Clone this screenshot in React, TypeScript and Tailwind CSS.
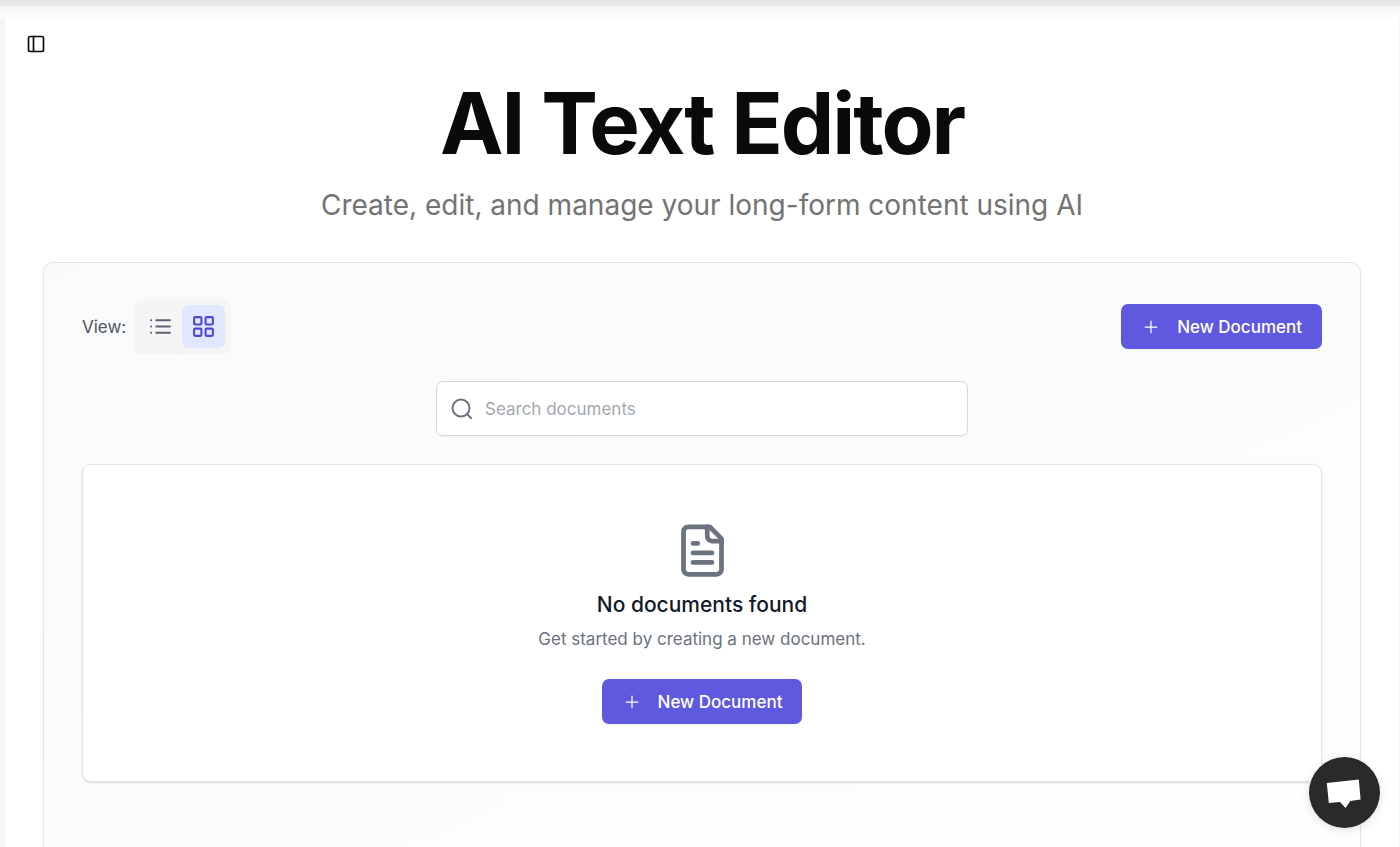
import { useState } from "react";
import type { ReactNode } from "react";

function Icon({ className, strokeWidth = 2, children }: { className: string; strokeWidth?: number; children: ReactNode }) {
  return (
    <svg
      className={className}
      viewBox="0 0 24 24"
      fill="none"
      stroke="currentColor"
      strokeWidth={strokeWidth}
      strokeLinecap="round"
      strokeLinejoin="round"
      aria-hidden="true"
    >
      {children}
    </svg>
  );
}

function NewDocumentButton() {
  return (
    <button
      type="button"
      className="flex h-[45px] items-center gap-4 rounded-[7px] bg-[#5f59e0] px-5 text-[17px] leading-6 font-medium text-white shadow-xs"
    >
      <Icon className="size-5" strokeWidth={1.5}>
        <path d="M5 12h14M12 5v14" />
      </Icon>
      New Document
    </button>
  );
}

function ViewButton({ label, active, onClick, children }: { label: string; active: boolean; onClick: () => void; children: ReactNode }) {
  return (
    <button
      type="button"
      aria-label={label}
      aria-pressed={active}
      onClick={onClick}
      className={
        active
          ? "rounded-[7px] bg-[#e0e7ff] p-[9px] text-[#5048cf]"
          : "rounded-[7px] p-[9px] text-[#5b6472]"
      }
    >
      <Icon className="size-[25px]">{children}</Icon>
    </button>
  );
}

export default function App() {
  const [view, setView] = useState("grid");
  const [query, setQuery] = useState("");

  return (
    <div className="min-h-screen bg-[#f6f6f6] pr-px pl-[5px] font-['Inter',sans-serif] text-[#0a0a0a]">
      <div className="pointer-events-none absolute inset-x-0 top-0">
        <div className="h-[6px] bg-linear-to-b from-[#e2e2e2] to-[#ececec]" />
        <div className="h-[12px] bg-linear-to-b from-[#f3f3f3] to-[#fdfdfd]" />
      </div>
      <main className="min-h-screen bg-white px-[38px] pt-[34px] pb-10">
        <button type="button" aria-label="Toggle sidebar" className="-ml-[17px] block">
          <Icon className="size-5">
            <rect width="18" height="18" x="3" y="3" rx="2" />
            <path d="M9 3v18" />
          </Icon>
        </button>

        <header className="mt-[25px] text-center">
          <h1 className="text-[85px] leading-[90px] font-bold tracking-tight">AI Text Editor</h1>
          <p className="mt-4 text-[28px] leading-[40px] text-[#737373]">
            Create, edit, and manage your long-form content using AI
          </p>
        </header>

        <section className="mt-[37px] min-h-[620px] rounded-[10px] border border-[#e5e5e5] bg-linear-to-br from-[#fafafa] to-[#fefefe] px-[38px] pt-[37px] pb-10">
          <div className="flex items-center justify-between">
            <div className="flex items-center gap-2">
              <span className="text-[17px] leading-6 text-[#4b5563]">View:</span>
              <div className="flex rounded-[8px] bg-[#f5f5f5] p-[5px] shadow-xs">
                <ViewButton label="List view" active={view === "list"} onClick={() => setView("list")}>
                  <path d="M8 6h13M8 12h13M8 18h13M3 6h.01M3 12h.01M3 18h.01" />
                </ViewButton>
                <ViewButton label="Grid view" active={view === "grid"} onClick={() => setView("grid")}>
                  <rect width="7" height="7" x="3" y="3" rx="1" />
                  <rect width="7" height="7" x="14" y="3" rx="1" />
                  <rect width="7" height="7" x="14" y="14" rx="1" />
                  <rect width="7" height="7" x="3" y="14" rx="1" />
                </ViewButton>
              </div>
            </div>
            <NewDocumentButton />
          </div>

          <label className="mx-auto mt-7 flex h-[55px] max-w-[532px] items-center gap-[11px] rounded-[7px] border border-[#d6d8dd] bg-white px-[13px] shadow-xs">
            <Icon className="size-[24px] shrink-0 text-[#6b7280]">
              <circle cx="11" cy="11" r="8.5" />
              <path d="m21 21-4-4" />
            </Icon>
            <input
              type="text"
              aria-label="Search documents"
              placeholder="Search documents"
              value={query}
              onChange={(e) => setQuery(e.target.value)}
              className="min-w-0 flex-1 bg-transparent text-[17px] leading-6 outline-none placeholder:text-[#a3a8b1]"
            />
          </label>

          <div className="mt-7 flex flex-col items-center rounded-[9px] border border-[#e5e5e5] bg-white px-6 pt-[57px] pb-[57px] shadow-sm">
            <Icon className="size-[57px] text-[#6b7280]">
              <path d="M15 2H6a2 2 0 0 0-2 2v16a2 2 0 0 0 2 2h12a2 2 0 0 0 2-2V7Z" />
              <path d="M14 2v4a2 2 0 0 0 2 2h4" />
              <path d="M10 9H8M16 13H8M16 17H8" />
            </Icon>
            <h2 className="mt-[9px] text-[21px] leading-[34px] font-medium text-[#111827]">No documents found</h2>
            <p className="mt-[5px] text-[17px] leading-6 text-[#6b7280]">Get started by creating a new document.</p>
            <div className="mt-7">
              <NewDocumentButton />
            </div>
          </div>
        </section>
      </main>

      <button
        type="button"
        aria-label="Open chat"
        className="fixed right-5 bottom-[19px] size-[71px] rounded-full bg-[#2a2a2a] shadow-[0_2px_10px_rgba(0,0,0,0.12)]"
      >
        <svg viewBox="0 0 71 71" className="size-full" aria-hidden="true">
          <path d="M17.8 26 49.8 22.5 51.6 42.5 41.3 44 36.5 51 31 45 19.8 46Z" fill="white" />
        </svg>
      </button>
    </div>
  );
}
